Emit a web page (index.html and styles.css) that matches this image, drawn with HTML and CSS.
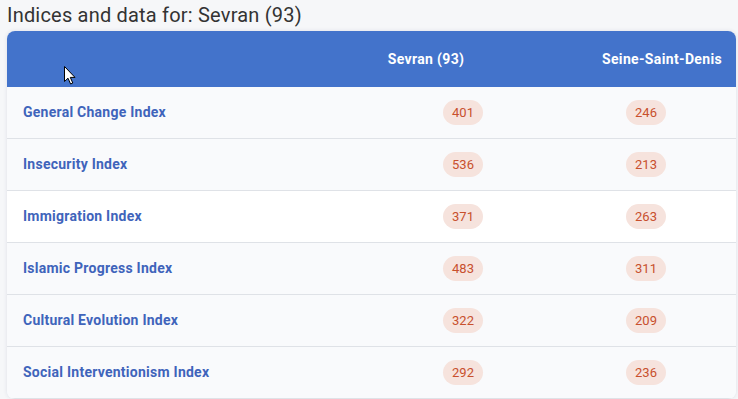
FILE: index.html
```html
<!DOCTYPE html>
<html lang="en">
<head>
<meta charset="utf-8">
<title>Indices</title>
<link rel="stylesheet" href="styles.css">
</head>
<body>
<h1 class="title">Indices and data for: Sevran (93)</h1>
<div class="card">
  <div class="row head">
    <div class="cell label"></div>
    <div class="cell num"><span class="h h1">Sevran (93)</span></div>
    <div class="cell num"><span class="h h2">Seine-Saint-Denis</span></div>
  </div>
  <div class="row">
    <div class="cell label">General Change Index</div>
    <div class="cell num"><span class="badge">401</span></div>
    <div class="cell num"><span class="badge">246</span></div>
  </div>
  <div class="row">
    <div class="cell label">Insecurity Index</div>
    <div class="cell num"><span class="badge">536</span></div>
    <div class="cell num"><span class="badge">213</span></div>
  </div>
  <div class="row white">
    <div class="cell label">Immigration Index</div>
    <div class="cell num"><span class="badge">371</span></div>
    <div class="cell num"><span class="badge">263</span></div>
  </div>
  <div class="row">
    <div class="cell label">Islamic Progress Index</div>
    <div class="cell num"><span class="badge">483</span></div>
    <div class="cell num"><span class="badge">311</span></div>
  </div>
  <div class="row">
    <div class="cell label">Cultural Evolution Index</div>
    <div class="cell num"><span class="badge">322</span></div>
    <div class="cell num"><span class="badge">209</span></div>
  </div>
  <div class="row">
    <div class="cell label">Social Interventionism Index</div>
    <div class="cell num"><span class="badge">292</span></div>
    <div class="cell num"><span class="badge">236</span></div>
  </div>
</div>
<svg class="cursor" width="12" height="19" viewBox="0 0 12 19"><path d="M0.5 0.5 L0.5 15.5 L4 12.2 L6.6 18 L8.8 17 L6.3 11.4 L11 11.4 Z" fill="#fff" stroke="#000" stroke-width="1"/></svg>
</body>
</html>
```

FILE: styles.css
```css
html, body {
  margin: 0;
  padding: 0;
}
body {
  background: #f6f7f9;
  font-family: Roboto, "Liberation Sans", Arial, sans-serif;
  width: 738px;
  height: 399px;
  overflow: hidden;
  position: relative;
}
.title {
  margin: 0;
  padding-left: 7px;
  font-size: 20px;
  font-weight: 400;
  letter-spacing: 0.2px;
  line-height: 30px;
  height: 31px;
  color: #333;
}
.card {
  margin-left: 7px;
  width: 729px;
  background: #f9fafc;
  border-radius: 8px;
  box-shadow: 0 0 4px rgba(40, 60, 100, 0.12);
  overflow: hidden;
}
.row {
  display: grid;
  grid-template-columns: 363px 186px 180px;
  height: 51px;
  border-bottom: 1px solid #dfe2e7;
  align-items: center;
  background: #f9fafc;
}
.row.white {
  background: #ffffff;
}
.row.head {
  height: 56px;
  border-bottom: none;
  background: #4373cb;
}
.cell.label {
  padding-left: 16px;
  font-size: 14px;
  font-weight: 700;
  letter-spacing: 0.25px;
  color: #3f64bb;
  line-height: 16px;
  padding-bottom: 2px;
}
.cell.num {
  display: flex;
  justify-content: center;
}
.h {
  color: #fff;
  font-size: 14px;
  font-weight: 700;
  letter-spacing: 0.35px;
}
.h1 {
  margin-right: 74px;
}
.h2 {
  margin-left: 32px;
}
.badge {
  display: inline-block;
  width: 40px;
  height: 25px;
  line-height: 25px;
  text-align: center;
  border-radius: 13px;
  background: #f6e3dd;
  color: #c8502d;
  font-size: 13px;
}
.cursor {
  position: absolute;
  left: 64px;
  top: 66px;
}
```
